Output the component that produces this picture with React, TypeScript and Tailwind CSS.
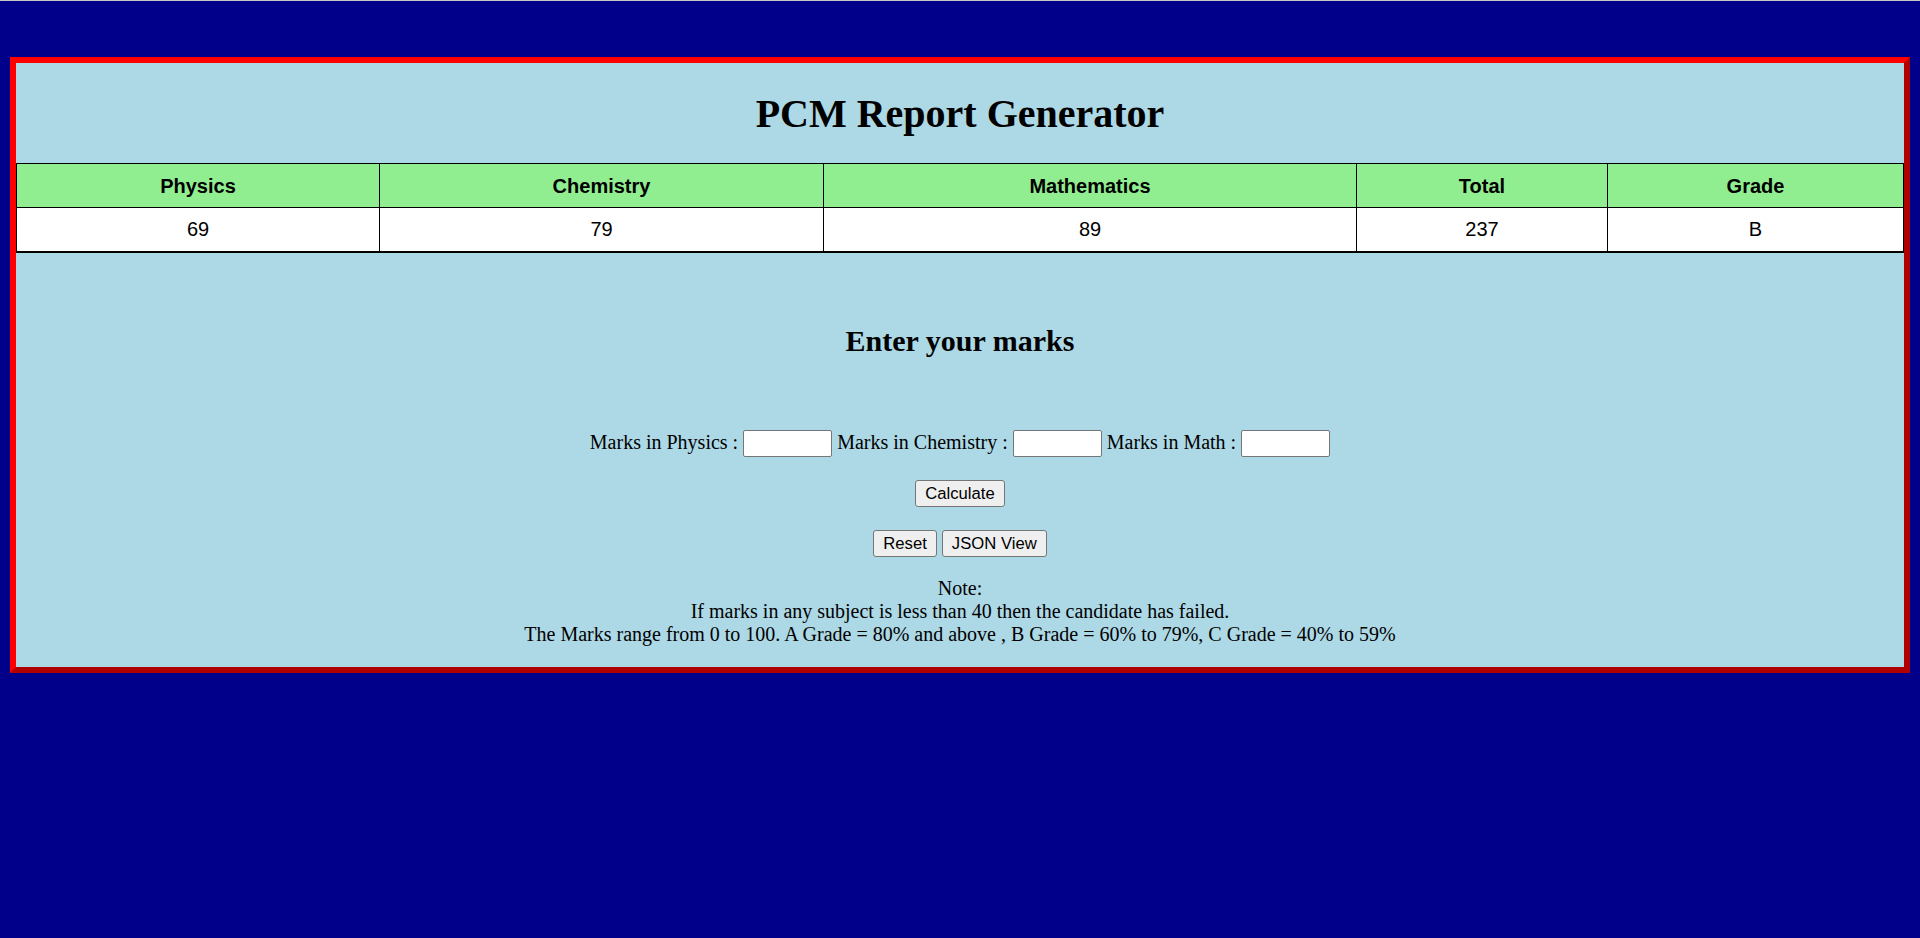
const marks = { physics: 69, chemistry: 79, math: 89 };

function getGrade(total: number) {
  const pct = (total / 300) * 100;
  if (pct >= 80) return "A";
  if (pct >= 60) return "B";
  if (pct >= 40) return "C";
  return "F";
}

export default function App() {
  const total = marks.physics + marks.chemistry + marks.math;
  const grade = getGrade(total);

  return (
    <div className="min-h-screen bg-[#00008b] font-['Liberation_Serif',serif] text-[20px] text-black">
      {/* strip of browser chrome at the very top */}
      <div className="h-px bg-[#c6c6c6]" />

      <div className="pt-[56px] px-[10px]">
        {/* report box with outset red border */}
        <div className="border-[6px] border-t-[#ff0000] border-l-[#ff0000] border-b-[#b00000] border-r-[#b00000] bg-[#add8e6]">
          <h1 className="mt-[28px] mb-[26px] text-center text-[40px] leading-[46px] font-bold">
            PCM Report Generator
          </h1>

          <table className="w-full border-collapse border-b-2 border-black font-['Liberation_Sans',Arial,sans-serif] text-[20px]">
            <thead>
              <tr className="h-[44px] bg-[#90ee90]">
                <th className="w-[363px] border border-black font-bold">Physics</th>
                <th className="w-[444px] border border-black font-bold">Chemistry</th>
                <th className="w-[533px] border border-black font-bold">Mathematics</th>
                <th className="w-[251px] border border-black font-bold">Total</th>
                <th className="border border-black font-bold">Grade</th>
              </tr>
            </thead>
            <tbody>
              <tr className="h-[44px] bg-white text-center">
                <td className="border border-black">{marks.physics}</td>
                <td className="border border-black">{marks.chemistry}</td>
                <td className="border border-black">{marks.math}</td>
                <td className="border border-black">{total}</td>
                <td className="border border-black">{grade}</td>
              </tr>
            </tbody>
          </table>

          <h2 className="mt-[71px] text-center text-[30px] leading-[34px] font-bold">
            Enter your marks
          </h2>

          {/* inputs line */}
          <div className="mt-[72px] text-center leading-[23px]">
            Marks in Physics :{" "}
            <input
              type="text"
              className="h-[27px] w-[89px] rounded-[2px] border border-[#767676] bg-white px-[2px] align-baseline font-['Liberation_Sans',Arial,sans-serif] text-[16.67px]"
            />{" "}
            Marks in Chemistry :{" "}
            <input
              type="text"
              className="h-[27px] w-[89px] rounded-[2px] border border-[#767676] bg-white px-[2px] align-baseline font-['Liberation_Sans',Arial,sans-serif] text-[16.67px]"
            />{" "}
            Marks in Math :{" "}
            <input
              type="text"
              className="h-[27px] w-[89px] rounded-[2px] border border-[#767676] bg-white px-[2px] align-baseline font-['Liberation_Sans',Arial,sans-serif] text-[16.67px]"
            />
          </div>

          <div className="mt-[23px] flex justify-center">
            <button className="h-[27px] rounded-[3px] border border-[#767676] bg-[#efefef] px-[9px] font-['Liberation_Sans',Arial,sans-serif] text-[16.67px] leading-[19px]">
              Calculate
            </button>
          </div>

          <div className="mt-[23px] flex justify-center gap-[5px]">
            <button className="h-[27px] rounded-[3px] border border-[#767676] bg-[#efefef] px-[9px] font-['Liberation_Sans',Arial,sans-serif] text-[16.67px] leading-[19px]">
              Reset
            </button>
            <button className="h-[27px] rounded-[3px] border border-[#767676] bg-[#efefef] px-[9px] font-['Liberation_Sans',Arial,sans-serif] text-[16.67px] leading-[19px]">
              JSON View
            </button>
          </div>

          <p className="mt-[20px] mb-[21px] text-center leading-[23px]">
            Note:
            <br />
            If marks in any subject is less than 40 then the candidate has failed.
            <br />
            The Marks range from 0 to 100. A Grade = 80% and above , B Grade = 60% to 79%, C Grade = 40% to 59%
          </p>
        </div>
      </div>
    </div>
  );
}
